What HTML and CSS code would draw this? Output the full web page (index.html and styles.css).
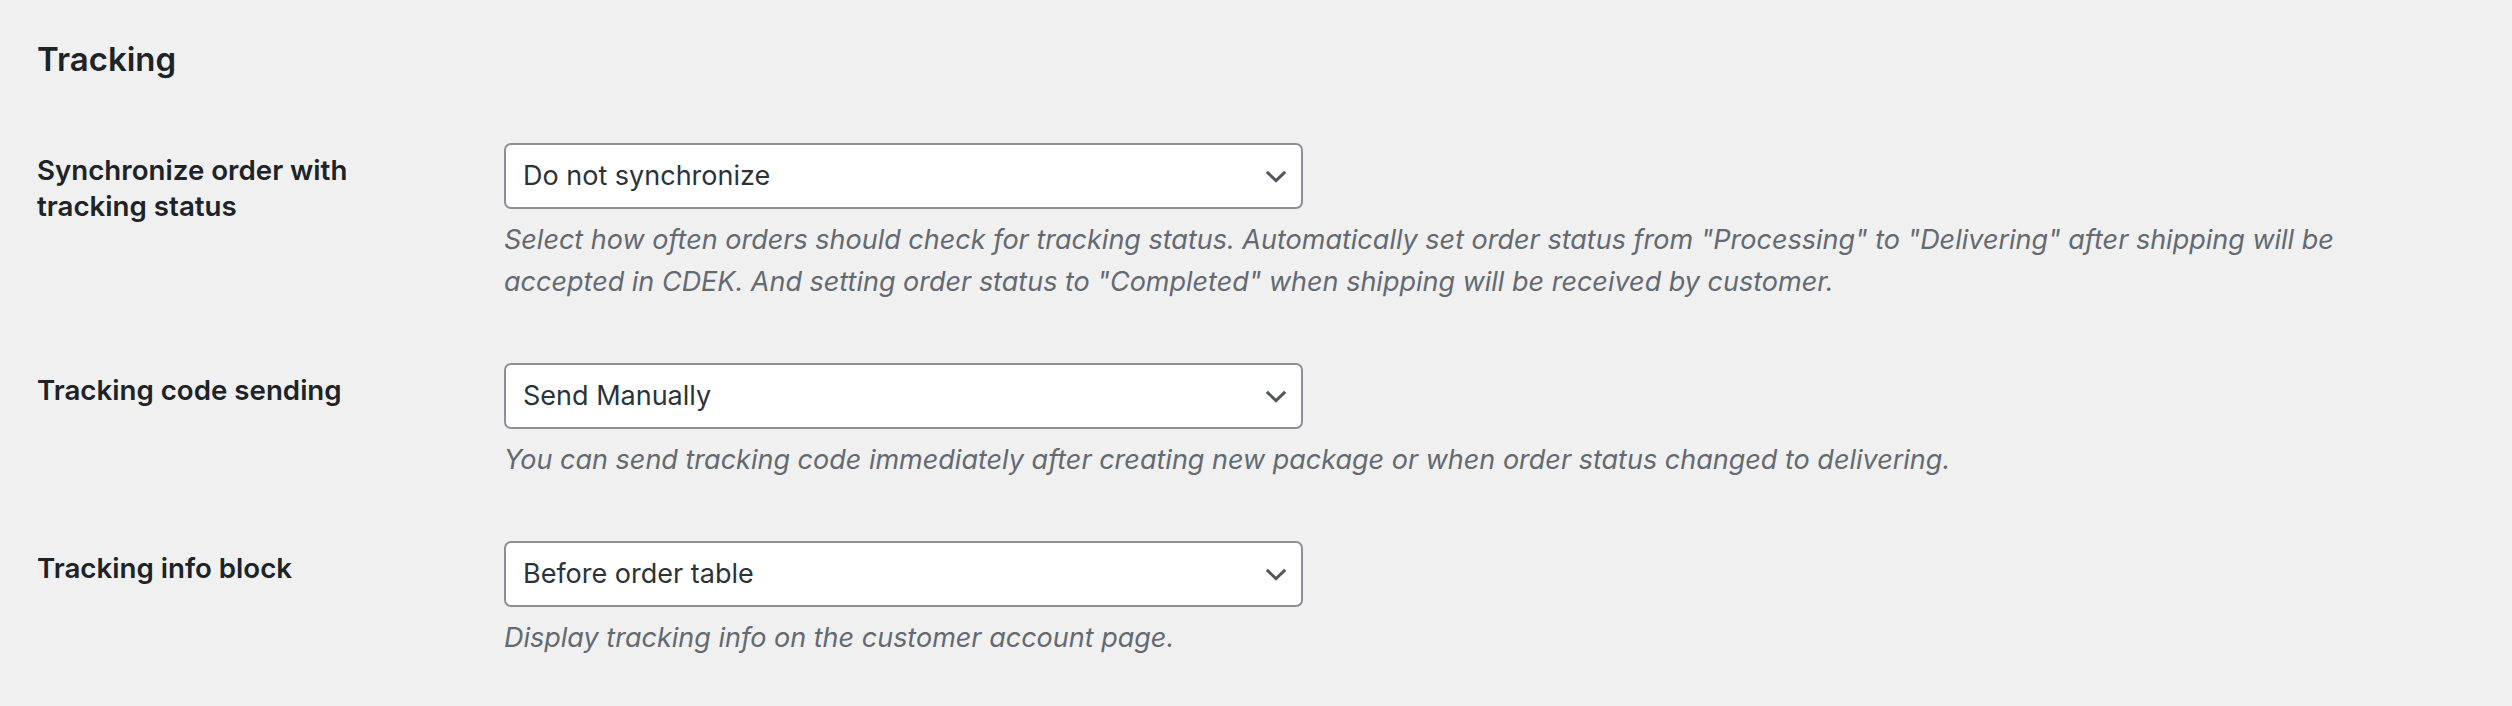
FILE: index.html
```html
<!DOCTYPE html>
<html lang="en">

<head>
    <meta charset="UTF-8">
    <meta name="viewport" content="width=device-width, initial-scale=1.0">
    <title>Tracking settings</title>
    <link rel="stylesheet" href="styles.css">
</head>

<body>

    <div class="settings">
        <h2 class="section-title">Tracking</h2>

        <div class="form-row">
            <label class="field-label" for="sync">Synchronize order with tracking status</label>
            <div class="field">
                <div class="select-wrap">
                    <select id="sync">
                        <option>Do not synchronize</option>
                    </select>
                    <svg class="chevron" viewBox="0 0 24 14" aria-hidden="true">
                        <path d="M2 2 L12 11.5 L22 2" />
                    </svg>
                </div>
                <p class="description">Select how often orders should check for tracking status. Automatically set order status from "Processing" to "Delivering" after shipping will be accepted in CDEK. And setting order status to "Completed" when shipping will be received by customer.</p>
            </div>
        </div>

        <div class="form-row">
            <label class="field-label" for="sending">Tracking code sending</label>
            <div class="field">
                <div class="select-wrap">
                    <select id="sending">
                        <option>Send Manually</option>
                    </select>
                    <svg class="chevron" viewBox="0 0 24 14" aria-hidden="true">
                        <path d="M2 2 L12 11.5 L22 2" />
                    </svg>
                </div>
                <p class="description">You can send tracking code immediately after creating new package or when order status changed to delivering.</p>
            </div>
        </div>

        <div class="form-row">
            <label class="field-label" for="block">Tracking info block</label>
            <div class="field">
                <div class="select-wrap">
                    <select id="block">
                        <option>Before order table</option>
                    </select>
                    <svg class="chevron" viewBox="0 0 24 14" aria-hidden="true">
                        <path d="M2 2 L12 11.5 L22 2" />
                    </svg>
                </div>
                <p class="description">Display tracking info on the customer account page.</p>
            </div>
        </div>
    </div>

</body>

</html>
```

FILE: styles.css
```css
body {
    margin: 0;
    background-color: #f0f0f1;
    color: #1d2327;
    font-family: Inter, "Noto Sans", sans-serif;
}

.settings {
    padding: 39px 0 0 37px;
    display: flex;
    flex-direction: column;
    gap: 60px;
}

.section-title {
    margin: 0 0 3px;
    font-size: 33px;
    font-weight: 600;
    line-height: 41px;
    color: #1d2327;
}

.form-row {
    display: grid;
    grid-template-columns: 467px 1fr;
}

.field-label {
    padding-top: 9px;
    width: 320px;
    font-size: 27.7px;
    font-weight: 600;
    line-height: 36px;
    color: #1d2327;
}

.field {
    display: flex;
    flex-direction: column;
}

.select-wrap {
    position: relative;
    width: 799px;
}

select {
    appearance: none;
    -webkit-appearance: none;
    display: block;
    box-sizing: border-box;
    width: 100%;
    height: 66px;
    margin: 0;
    padding: 0 60px 0 17px;
    border: 2px solid #8c8f94;
    border-radius: 7px;
    background-color: #fff;
    color: #2c3338;
    font-family: Inter, "Noto Sans", sans-serif;
    font-size: 27px;
    line-height: 36px;
}

.chevron {
    position: absolute;
    right: 16px;
    top: 27px;
    width: 22px;
    height: 13px;
    fill: none;
    stroke: #50575e;
    stroke-width: 3.2;
}

.description {
    margin: 10px 0 0;
    font-size: 27px;
    font-style: italic;
    line-height: 42px;
    color: #646970;
    max-width: 1880px;
}
```
